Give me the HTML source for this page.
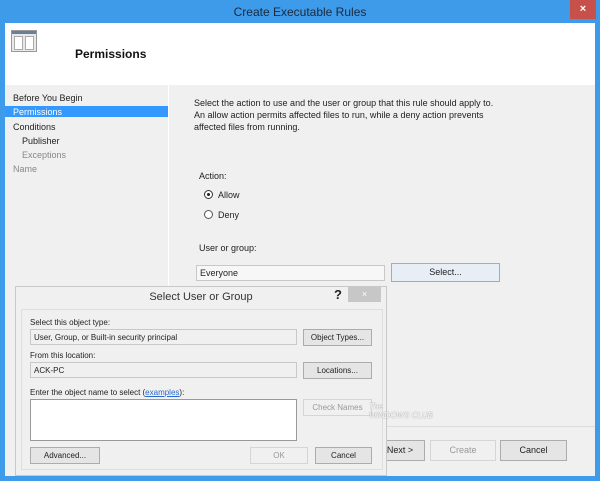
<!DOCTYPE html>
<html><head><style>
*{margin:0;padding:0;box-sizing:border-box}
body{width:600px;height:481px;overflow:hidden;background:#3d9be9;font-family:"Liberation Sans",sans-serif;font-size:9px;color:#222;position:relative}
.a{position:absolute}
.btn{position:absolute;background:#e5e5e5;border:1px solid #acacac;text-align:center;font-size:9px}
.fld{position:absolute;background:#f0f0f0;border:1px solid #c8c8c8;padding:3px 3px;font-size:8px}
</style></head><body>
<div class="a" style="left:0;top:5px;width:600px;text-align:center;font-size:12px;color:#1a2a40">Create Executable Rules</div>
<div class="a" style="left:570px;top:0;width:26px;height:19px;background:#c7504a;color:#fff;text-align:center;font-size:11px;line-height:18px;font-weight:bold">×</div>
<div class="a" style="left:5px;top:23px;width:590px;height:62px;background:#fff"></div>
<div class="a" style="left:11px;top:30px;width:26px;height:22px;background:#e8e8e8;border:1px solid #999">
 <div class="a" style="left:0;top:0;width:24px;height:3px;background:#6a7e95"></div>
 <div class="a" style="left:2px;top:5px;width:9px;height:14px;border:1px solid #aaa;background:#fff"></div>
 <div class="a" style="left:13px;top:5px;width:9px;height:14px;border:1px solid #aaa;background:#fff"></div>
</div>
<div class="a" style="left:75px;top:47px;font-size:12px;font-weight:bold;color:#111">Permissions</div>
<div class="a" style="left:5px;top:85px;width:163px;height:391px;background:#f0f0f0"></div>
<div class="a" style="left:168px;top:85px;width:1px;height:341px;background:#fff"></div>
<div class="a" style="left:169px;top:85px;width:426px;height:391px;background:#f0f0f0"></div>
<div class="a" style="left:169px;top:426px;width:426px;height:1px;background:#dcdcdc"></div>
<div class="a" style="left:13px;top:93px">Before You Begin</div>
<div class="a" style="left:5px;top:106px;width:163px;height:11px;background:#3399ff"></div>
<div class="a" style="left:13px;top:107px;color:#fff">Permissions</div>
<div class="a" style="left:13px;top:122px">Conditions</div>
<div class="a" style="left:22px;top:136px">Publisher</div>
<div class="a" style="left:22px;top:150px;color:#888">Exceptions</div>
<div class="a" style="left:13px;top:164px;color:#888">Name</div>
<div class="a" style="left:194px;top:97px;line-height:12px">Select the action to use and the user or group that this rule should apply to.<br>An allow action permits affected files to run, while a deny action prevents<br>affected files from running.</div>
<div class="a" style="left:199px;top:171px">Action:</div>
<div class="a" style="left:204px;top:190px;width:9px;height:9px;border:1px solid #333;border-radius:50%;background:#fff"><div class="a" style="left:2px;top:2px;width:3px;height:3px;border-radius:50%;background:#222"></div></div>
<div class="a" style="left:218px;top:190px">Allow</div>
<div class="a" style="left:204px;top:210px;width:9px;height:9px;border:1px solid #555;border-radius:50%;background:#fff"></div>
<div class="a" style="left:218px;top:210px">Deny</div>
<div class="a" style="left:199px;top:243px">User or group:</div>
<div class="fld" style="left:196px;top:265px;width:189px;height:16px;background:#f7f7f7;font-size:9px;padding:2px 3px">Everyone</div>
<div class="btn" style="left:391px;top:263px;width:109px;height:19px;line-height:17px;border-color:#7eb4ea;background:#e8eef5">Select...</div>
<div class="btn" style="left:375px;top:440px;width:50px;height:21px;line-height:19px">Next &gt;</div>
<div class="btn" style="left:430px;top:440px;width:66px;height:21px;line-height:19px;color:#999;background:#f0f0f0;border-color:#d5d5d5">Create</div>
<div class="btn" style="left:500px;top:440px;width:67px;height:21px;line-height:19px">Cancel</div>
<!-- dialog -->
<div class="a" style="left:15px;top:286px;width:372px;height:190px;background:#f0f0f0;border:1px solid #c8c8c8"></div>
<div class="a" style="left:15px;top:291px;width:372px;text-align:center;font-size:11px;color:#333">Select User or Group</div>
<div class="a" style="left:334px;top:287px;font-size:13px;font-weight:bold">?</div>
<div class="a" style="left:348px;top:287px;width:33px;height:15px;background:#c7c7c7;color:#fff;text-align:center;font-size:9px;line-height:15px">×</div>
<div class="a" style="left:21px;top:309px;width:362px;height:161px;border:1px solid #dedede"></div>
<div class="a" style="left:30px;top:318px;font-size:8px">Select this object type:</div>
<div class="fld" style="left:30px;top:329px;width:267px;height:16px">User, Group, or Built-in security principal</div>
<div class="btn" style="left:303px;top:329px;width:69px;height:17px;line-height:15px;font-size:8px">Object Types...</div>
<div class="a" style="left:30px;top:351px;font-size:8px">From this location:</div>
<div class="fld" style="left:30px;top:362px;width:267px;height:16px">ACK-PC</div>
<div class="btn" style="left:303px;top:362px;width:69px;height:17px;line-height:15px;font-size:8px">Locations...</div>
<div class="a" style="left:30px;top:388px;font-size:8px">Enter the object name to select (<span style="color:#2a6ad0;text-decoration:underline">examples</span>):</div>
<div class="a" style="left:30px;top:399px;width:267px;height:42px;background:#fff;border:1px solid #999"></div>
<div class="btn" style="left:303px;top:399px;width:69px;height:17px;line-height:15px;font-size:8px;color:#999;background:#f0f0f0;border-color:#d5d5d5">Check Names</div>
<div class="a" style="left:369px;top:402px;font-size:8px;line-height:9px;color:#fff;font-style:italic;text-shadow:0 0 1px #666">The<br>WINDOWS CLUB</div>
<div class="btn" style="left:30px;top:447px;width:70px;height:17px;line-height:15px;font-size:8px">Advanced...</div>
<div class="btn" style="left:250px;top:447px;width:58px;height:17px;line-height:15px;font-size:8px;color:#999;background:#f0f0f0;border-color:#d5d5d5">OK</div>
<div class="btn" style="left:315px;top:447px;width:57px;height:17px;line-height:15px;font-size:8px">Cancel</div>
</body></html>
